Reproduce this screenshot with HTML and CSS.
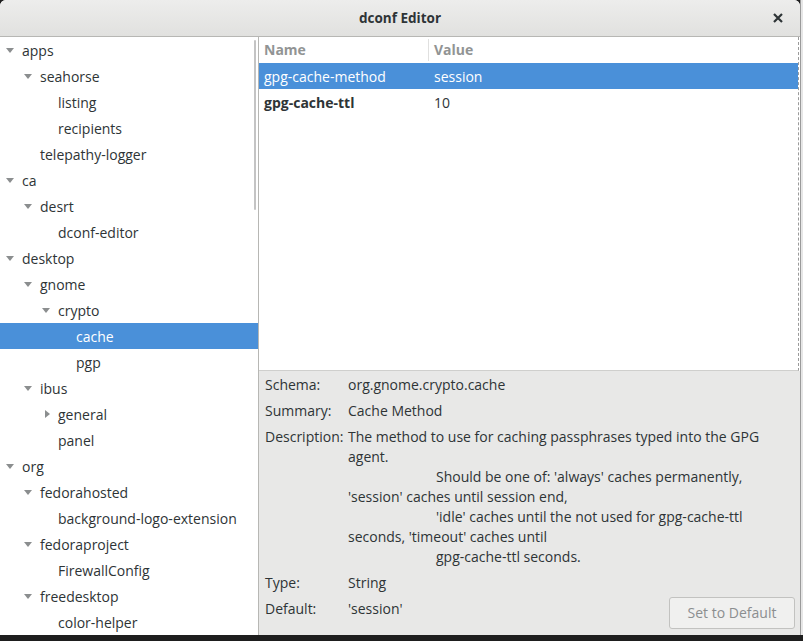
FILE: index.html
```html
<!DOCTYPE html>
<html>
<head>
<meta charset="utf-8">
<title>dconf Editor</title>
<link rel="stylesheet" href="styles.css">
</head>
<body>
<div class="screen">
  <div class="window">
    <header class="titlebar">
      <span class="title">dconf Editor</span>
      <span class="close">
        <svg width="12" height="12" viewBox="0 0 12 12"><path d="M2 2 L10 10 M10 2 L2 10" stroke="#2e3436" stroke-width="2.2" stroke-linecap="butt"/></svg>
      </span>
    </header>
    <div class="content">
      <aside class="tree">
        <div class="node l0"><span class="exp down"></span>apps</div>
        <div class="node l1"><span class="exp down"></span>seahorse</div>
        <div class="node l2"><span class="exp"></span>listing</div>
        <div class="node l2"><span class="exp"></span>recipients</div>
        <div class="node l1"><span class="exp"></span>telepathy-logger</div>
        <div class="node l0"><span class="exp down"></span>ca</div>
        <div class="node l1"><span class="exp down"></span>desrt</div>
        <div class="node l2"><span class="exp"></span>dconf-editor</div>
        <div class="node l0"><span class="exp down"></span>desktop</div>
        <div class="node l1"><span class="exp down"></span>gnome</div>
        <div class="node l2"><span class="exp down"></span>crypto</div>
        <div class="node l3 selected"><span class="exp"></span>cache</div>
        <div class="node l3"><span class="exp"></span>pgp</div>
        <div class="node l1"><span class="exp down"></span>ibus</div>
        <div class="node l2"><span class="exp right"></span>general</div>
        <div class="node l2"><span class="exp"></span>panel</div>
        <div class="node l0"><span class="exp down"></span>org</div>
        <div class="node l1"><span class="exp down"></span>fedorahosted</div>
        <div class="node l2"><span class="exp"></span>background-logo-extension</div>
        <div class="node l1"><span class="exp down"></span>fedoraproject</div>
        <div class="node l2"><span class="exp"></span>FirewallConfig</div>
        <div class="node l1"><span class="exp down"></span>freedesktop</div>
        <div class="node l2"><span class="exp"></span>color-helper</div>
        <div class="scroll-ind"></div>
      </aside>
      <section class="main">
        <div class="list">
          <div class="list-head">
            <div class="cell name">Name</div>
            <div class="cell value">Value</div>
          </div>
          <div class="list-row selected">
            <div class="cell name">gpg-cache-method</div>
            <div class="cell value">session</div>
          </div>
          <div class="list-row">
            <div class="cell name strong">gpg-cache-ttl</div>
            <div class="cell value">10</div>
          </div>
        </div>
        <div class="info">
          <div class="label">Schema:</div>
          <div class="val wide">org.gnome.crypto.cache</div>
          <div class="label">Summary:</div>
          <div class="val wide">Cache Method</div>
          <div class="label">Description:</div>
          <div class="val wide desc">
            <div>The method to use for caching passphrases typed into the GPG</div>
            <div>agent.</div>
            <div class="ind">Should be one of: 'always' caches permanently,</div>
            <div>'session' caches until session end,</div>
            <div class="ind">'idle' caches until the not used for gpg-cache-ttl</div>
            <div>seconds, 'timeout' caches until</div>
            <div class="ind">gpg-cache-ttl seconds.</div>
          </div>
          <div class="label">Type:</div>
          <div class="val wide">String</div>
          <div class="label">Default:</div>
          <div class="val">'session'</div>
          <button class="btn" disabled>Set to Default</button>
        </div>
      </section>
    </div>
  </div>
  <div class="side"></div>
</div>
<div class="bottom"></div>
</body>
</html>
```

FILE: styles.css
```css
* { box-sizing: border-box; }
html, body { margin: 0; padding: 0; }
body {
  width: 803px;
  height: 641px;
  overflow: hidden;
  background: #1e1e1e;
  font-family: "Open Sans", "Noto Sans", sans-serif;
  font-size: 14px;
  color: #2e3436;
}
.screen {
  display: flex;
  height: 635px;
}
.window {
  width: 800px;
  height: 635px;
  display: flex;
  flex-direction: column;
  background: #ffffff;
  border-radius: 6px 6px 0 0;
  overflow: hidden;
}
.side {
  width: 3px;
  height: 635px;
  background: #e6e6e6;
  border-left: 1px solid #9a9a9a;
}
.bottom {
  height: 6px;
  background: #1e1e1e;
}
.titlebar {
  height: 37px;
  flex: none;
  display: flex;
  align-items: center;
  justify-content: center;
  position: relative;
  background: linear-gradient(#ededec, #e1e1df);
  border-bottom: 1px solid #b7b7b4;
}
.title {
  font-weight: bold;
  font-size: 13.5px;
}
.close {
  position: absolute;
  right: 16px;
  top: 12px;
  width: 12px;
  height: 12px;
  display: block;
}
.close svg { display: block; }
.content {
  flex: 1;
  display: flex;
  min-height: 0;
}
.tree {
  width: 259px;
  flex: none;
  border-right: 1px solid #b7b7b4;
  position: relative;
  background: #fff;
}
.node {
  height: 26px;
  display: flex;
  align-items: center;
  white-space: nowrap;
}
.node.l1 { padding-left: 18px; }
.node.l2 { padding-left: 36px; }
.node.l3 { padding-left: 54px; }
.node.selected { background: #4a90d9; color: #fff; }
.exp {
  width: 22px;
  height: 26px;
  flex: none;
  position: relative;
}
.exp.down::before {
  content: "";
  position: absolute;
  left: 6px;
  top: 11px;
  border-left: 4px solid transparent;
  border-right: 4px solid transparent;
  border-top: 5px solid #8b8e8f;
}
.exp.right::before {
  content: "";
  position: absolute;
  left: 9px;
  top: 9px;
  border-top: 4px solid transparent;
  border-bottom: 4px solid transparent;
  border-left: 5px solid #8b8e8f;
}
.scroll-ind {
  position: absolute;
  right: 2px;
  top: 3px;
  width: 2px;
  height: 170px;
  background: #c4c4c4;
  border-radius: 1px;
}
.main {
  flex: 1;
  display: flex;
  flex-direction: column;
  min-width: 0;
}
.list {
  height: 334px;
  flex: none;
  background: #fff;
  border-right: 1px dashed #9a9a9a;
  margin-right: 1px;
  border-bottom: 1px solid #cfcfcd;
}
.list-head, .list-row {
  display: flex;
  height: 26px;
  align-items: center;
}
.list-head { color: #919494; font-weight: bold; }
.cell { white-space: nowrap; }
.cell.name { width: 169px; padding-left: 5px; }
.cell.value { padding-left: 6px; }
.list-head .cell.value { border-left: 1px solid #e0e0df; height: 22px; line-height: 22px; padding-left: 5px; }
.list-head .cell.name { height: 22px; line-height: 22px; }
.list-row.selected { background: #4a90d9; color: #fff; }
.strong { font-weight: bold; }
.info {
  flex: 1;
  background: #e8e8e7;
  display: grid;
  grid-template-columns: 83px 1fr auto;
  row-gap: 6px;
  align-content: start;
  padding: 4px 5px 0 6px;
  line-height: 20px;
}
.label { grid-column: 1; white-space: nowrap; }
.val { grid-column: 2; white-space: nowrap; }
.val.wide { grid-column: 2 / 4; }
.desc .ind { padding-left: 88px; }
.btn {
  grid-column: 3;
  width: 126px;
  height: 32px;
  margin-top: -2px;
  font: inherit;
  color: #8b8e8f;
  background: #f0f0ef;
  border: 1px solid #c2c2c0;
  border-radius: 3px;
  padding: 0;
}
```
